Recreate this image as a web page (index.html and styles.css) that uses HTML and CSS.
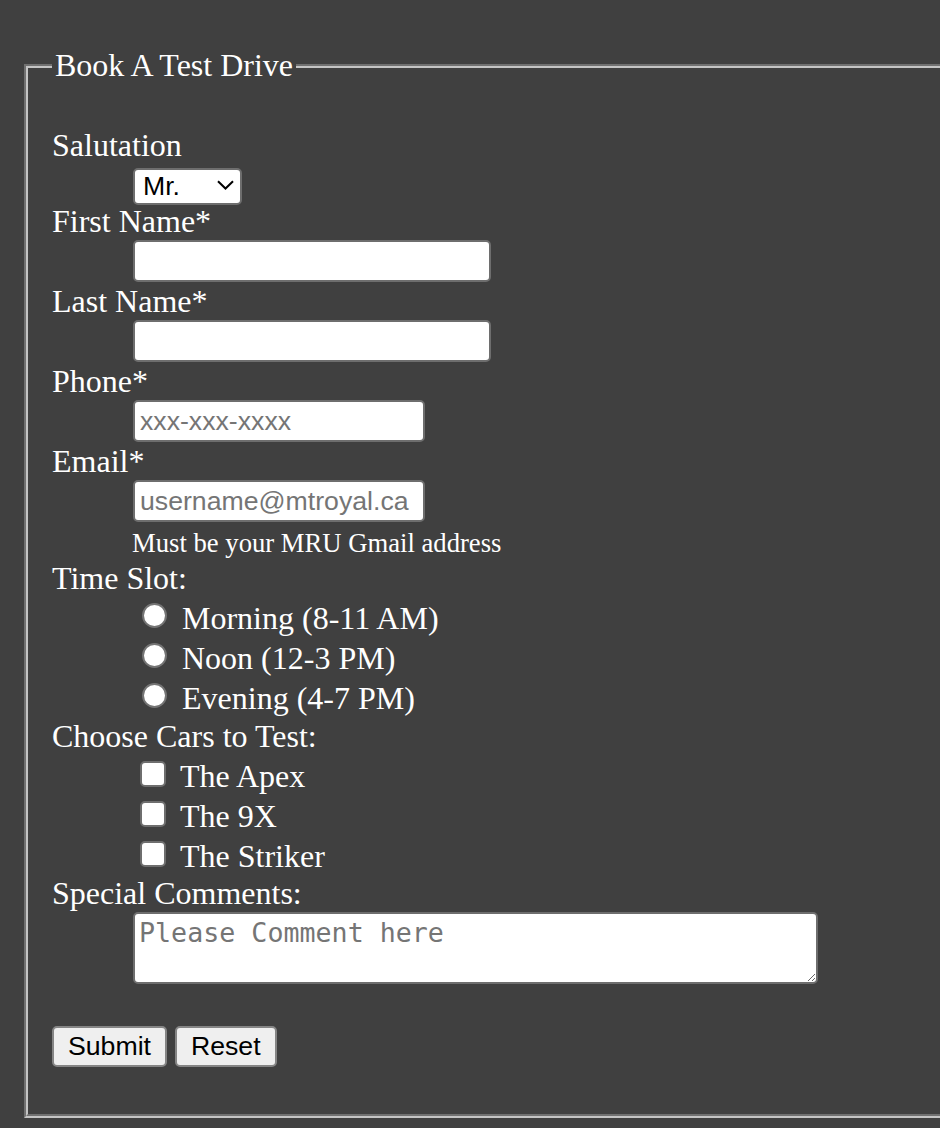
FILE: index.html
```html
<!DOCTYPE html>
<html lang="en">
<head>
<meta charset="utf-8">
<title>Book A Test Drive</title>
<link rel="stylesheet" href="styles.css">
</head>
<body>
<form class="booking">
  <fieldset class="panel">
    <legend class="panel-title">Book A Test Drive</legend>

    <label class="field-label" for="salutation">Salutation</label>
    <div class="row row-select">
      <div class="select-wrap">
        <select id="salutation" class="select">
          <option>Mr.</option>
          <option>Mrs.</option>
          <option>Ms.</option>
          <option>Dr.</option>
        </select>
        <svg class="chevron" width="17" height="10" viewBox="0 0 17 10" aria-hidden="true">
          <path d="M1 1.2 L8.5 8.5 L16 1.2" fill="none" stroke="#000" stroke-width="2"/>
        </svg>
      </div>
    </div>

    <label class="field-label" for="first">First Name*</label>
    <div class="row row-input"><input id="first" class="text-input" type="text"></div>

    <label class="field-label" for="last">Last Name*</label>
    <div class="row row-input"><input id="last" class="text-input" type="text"></div>

    <label class="field-label" for="phone">Phone*</label>
    <div class="row row-input"><input id="phone" class="text-input short" type="tel" placeholder="xxx-xxx-xxxx"></div>

    <label class="field-label" for="email">Email*</label>
    <div class="row row-input"><input id="email" class="text-input short" type="email" placeholder="username@mtroyal.ca"></div>
    <div class="hint">Must be your MRU Gmail address</div>

    <div class="field-label">Time Slot:</div>
    <label class="choice choice-radio"><input class="radio" type="radio" name="slot"><span class="choice-text">Morning (8-11 AM)</span></label>
    <label class="choice choice-radio"><input class="radio" type="radio" name="slot"><span class="choice-text">Noon (12-3 PM)</span></label>
    <label class="choice choice-radio"><input class="radio" type="radio" name="slot"><span class="choice-text">Evening (4-7 PM)</span></label>

    <div class="field-label">Choose Cars to Test:</div>
    <label class="choice choice-check"><input class="check" type="checkbox"><span class="choice-text">The Apex</span></label>
    <label class="choice choice-check"><input class="check" type="checkbox"><span class="choice-text">The 9X</span></label>
    <label class="choice choice-check"><input class="check" type="checkbox"><span class="choice-text">The Striker</span></label>

    <label class="field-label label-comments" for="comments">Special Comments:</label>
    <textarea id="comments" class="comments" placeholder="Please Comment here"></textarea>

    <div class="actions">
      <button type="submit" class="btn">Submit</button>
      <button type="reset" class="btn">Reset</button>
    </div>
  </fieldset>
</form>
</body>
</html>
```

FILE: styles.css
```css
html, body {
  margin: 0;
  padding: 0;
  background: #404040;
}

body {
  font-family: "Liberation Serif", "Times New Roman", serif;
  font-size: 32px;
  color: #ffffff;
}

.booking {
  margin: 0;
}

.panel {
  margin: 47px 0 0 24px;
  border: 4px groove #c4c4c4;
  border-right: none;
  padding: 42px 0 47px 24px;
  min-width: 0;
}

.panel-title {
  padding: 0 3px;
  font-size: 32px;
  line-height: normal;
}

.field-label {
  display: block;
  height: 38px;
  line-height: 38px;
  white-space: nowrap;
}

.label-comments {
  height: 37px;
  line-height: 36px;
}

.row {
  box-sizing: border-box;
  padding-left: 81px;
}

.row-select {
  height: 38px;
  padding-top: 2px;
}

.row-input {
  height: 42px;
}

.select-wrap {
  position: relative;
  width: 109px;
  height: 37px;
}

.select {
  -webkit-appearance: none;
  appearance: none;
  box-sizing: border-box;
  width: 109px;
  height: 37px;
  margin: 0;
  padding: 0 0 0 8px;
  border: 2px solid #6e6e6e;
  border-radius: 5px;
  background: #ffffff;
  color: #000000;
  font-family: "Liberation Sans", Arial, sans-serif;
  font-size: 26.67px;
}

.chevron {
  position: absolute;
  left: 84px;
  top: 14px;
  pointer-events: none;
}

.text-input {
  box-sizing: border-box;
  width: 358px;
  height: 42px;
  margin: 0;
  padding: 0 5px;
  border: 2px solid #6e6e6e;
  border-radius: 5px;
  background: #ffffff;
  color: #000000;
  font-family: "Liberation Sans", Arial, sans-serif;
  font-size: 26.67px;
}

.text-input.short {
  width: 292px;
}

.text-input::placeholder,
.comments::placeholder {
  color: #757575;
  opacity: 1;
}

.hint {
  box-sizing: border-box;
  height: 37px;
  padding: 5px 0 0 80px;
  font-size: 26.67px;
  line-height: 32px;
  white-space: nowrap;
}

.choice {
  box-sizing: border-box;
  display: flex;
  align-items: flex-start;
  height: 40px;
}

.choice-radio {
  padding-left: 90px;
  gap: 15px;
}

.choice-check {
  padding-left: 88px;
  gap: 14px;
}

.choice-text {
  line-height: 42px;
  height: 40px;
  white-space: nowrap;
}

.radio {
  -webkit-appearance: none;
  appearance: none;
  box-sizing: border-box;
  flex: none;
  width: 25px;
  height: 25px;
  margin: 6px 0 0 0;
  border: 2px solid #747474;
  border-radius: 50%;
  background: #ffffff;
}

.check {
  -webkit-appearance: none;
  appearance: none;
  box-sizing: border-box;
  flex: none;
  width: 26px;
  height: 26px;
  margin: 6px 0 0 0;
  border: 2px solid #6e6e6e;
  border-radius: 5px;
  background: #ffffff;
}

.comments {
  display: block;
  box-sizing: border-box;
  width: 685px;
  height: 72px;
  margin: 0 0 0 81px;
  padding: 3px 4px;
  border: 2px solid #6e6e6e;
  border-radius: 5px;
  background: #ffffff;
  color: #000000;
  font-family: "DejaVu Sans Mono", "Liberation Mono", monospace;
  font-size: 26.67px;
}

.actions {
  display: flex;
  gap: 8px;
  margin-top: 42px;
}

.btn {
  box-sizing: border-box;
  height: 41px;
  margin: 0;
  padding: 0 14px;
  border: 2px solid #858585;
  border-radius: 5px;
  background: #efefef;
  color: #000000;
  font-family: "Liberation Sans", Arial, sans-serif;
  font-size: 26.67px;
}
```
